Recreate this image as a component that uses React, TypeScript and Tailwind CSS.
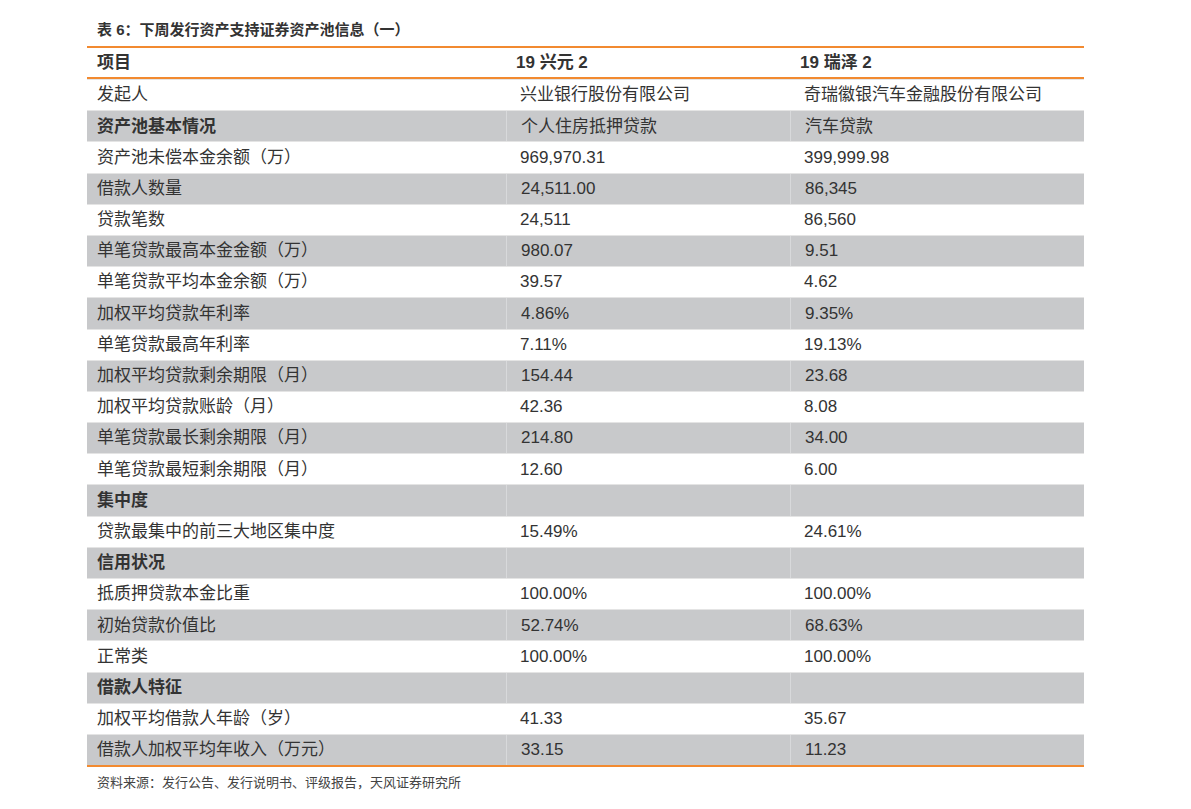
const rows: [string, string, string, boolean?][] = [
  ["发起人", "兴业银行股份有限公司", "奇瑞徽银汽车金融股份有限公司"],
  ["资产池基本情况", "个人住房抵押贷款", "汽车贷款", true],
  ["资产池未偿本金余额（万）", "969,970.31", "399,999.98"],
  ["借款人数量", "24,511.00", "86,345"],
  ["贷款笔数", "24,511", "86,560"],
  ["单笔贷款最高本金金额（万）", "980.07", "9.51"],
  ["单笔贷款平均本金余额（万）", "39.57", "4.62"],
  ["加权平均贷款年利率", "4.86%", "9.35%"],
  ["单笔贷款最高年利率", "7.11%", "19.13%"],
  ["加权平均贷款剩余期限（月）", "154.44", "23.68"],
  ["加权平均贷款账龄（月）", "42.36", "8.08"],
  ["单笔贷款最长剩余期限（月）", "214.80", "34.00"],
  ["单笔贷款最短剩余期限（月）", "12.60", "6.00"],
  ["集中度", "", "", true],
  ["贷款最集中的前三大地区集中度", "15.49%", "24.61%"],
  ["信用状况", "", "", true],
  ["抵质押贷款本金比重", "100.00%", "100.00%"],
  ["初始贷款价值比", "52.74%", "68.63%"],
  ["正常类", "100.00%", "100.00%"],
  ["借款人特征", "", "", true],
  ["加权平均借款人年龄（岁）", "41.33", "35.67"],
  ["借款人加权平均年收入（万元）", "33.15", "11.23"],
]

export default function App() {
  return (
    <div
      className="w-[1191px] h-[809px] bg-white text-[#333]"
      style={{ fontFamily: '"Liberation Sans", "Noto Sans CJK SC", sans-serif' }}
    >
      <div className="ml-[87px] w-[997px] pt-[18px]">
        <div className="h-[28px] pl-[10px] text-[15px] font-bold leading-[24px]">
          表 6：下周发行资产支持证券资产池信息（一）
        </div>
        <div className="border-t-2 border-b-2 border-[#f28a30] grid grid-cols-[419px_284px_294px] h-[33px] items-center text-[17px] font-bold">
          <div className="pl-[10px]">项目</div>
          <div className="pl-[10px]">19 兴元 2</div>
          <div className="pl-[10px]">19 瑞泽 2</div>
        </div>
        <div className="border-b-2 border-[#f28a30]">
          {rows.map(([a, b, c, bold], i) => (
            <div
              key={a}
              className={`grid grid-cols-[419px_284px_294px] h-[31.2px] items-center text-[17px] border-t border-[#e4e4e4] ${
                i % 2 === 1 ? "bg-[#c8c9cb]" : "bg-white"
              }`}
            >
              <div className={`pl-[10px] h-full flex items-center ${bold ? "font-bold" : ""}`}>{a}</div>
              <div className={`pl-[14px] h-full flex items-center ${i % 2 === 1 ? "border-l border-[#d8d9db]" : ""}`}>{b}</div>
              <div className={`pl-[14px] h-full flex items-center ${i % 2 === 1 ? "border-l border-[#d8d9db]" : ""}`}>{c}</div>
            </div>
          ))}
        </div>
        <div className="pl-[10px] pt-[6px] text-[13px] text-[#444]">
          资料来源：发行公告、发行说明书、评级报告，天风证券研究所
        </div>
      </div>
    </div>
  )
}
